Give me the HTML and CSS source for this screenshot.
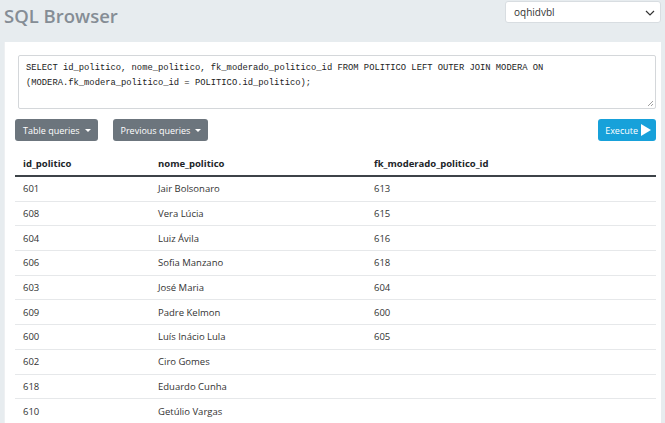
FILE: index.html
```html
<!DOCTYPE html>
<html>
<head>
<meta charset="utf-8">
<link rel="stylesheet" href="styles.css">
</head>
<body>
<header class="topbar">
  <h1 class="title">SQL Browser</h1>
  <div class="select">
    <span>oqhidvbl</span>
    <svg class="chev" width="10" height="6" viewBox="0 0 10 6"><path d="M1 1l4 4 4-4" fill="none" stroke="#333" stroke-width="1.2"/></svg>
  </div>
</header>
<main class="panel">
  <div class="editor">SELECT id_politico, nome_politico, fk_moderado_politico_id FROM POLITICO LEFT OUTER JOIN MODERA ON (MODERA.fk_modera_politico_id = POLITICO.id_politico);<svg class="grip" width="7" height="7" viewBox="0 0 7 7"><path d="M6 1L1 6M6 4L4 6" stroke="#888" stroke-width="0.8"/></svg></div>
  <div class="toolbar">
    <button class="btn btn-grey">Table queries <span class="caret"></span></button>
    <button class="btn btn-grey">Previous queries <span class="caret"></span></button>
    <button class="btn btn-blue exec">Execute <svg width="10" height="12" viewBox="0 0 10 12"><path d="M0 0L10 6L0 12Z" fill="#fff"/></svg></button>
  </div>
  <table class="results">
    <thead>
      <tr><th class="c1">id_politico</th><th class="c2">nome_politico</th><th>fk_moderado_politico_id</th></tr>
    </thead>
    <tbody>
      <tr><td>601</td><td>Jair Bolsonaro</td><td>613</td></tr>
      <tr><td>608</td><td>Vera Lúcia</td><td>615</td></tr>
      <tr><td>604</td><td>Luiz Ávila</td><td>616</td></tr>
      <tr><td>606</td><td>Sofia Manzano</td><td>618</td></tr>
      <tr><td>603</td><td>José Maria</td><td>604</td></tr>
      <tr><td>609</td><td>Padre Kelmon</td><td>600</td></tr>
      <tr><td>600</td><td>Luís Inácio Lula</td><td>605</td></tr>
      <tr><td>602</td><td>Ciro Gomes</td><td></td></tr>
      <tr><td>618</td><td>Eduardo Cunha</td><td></td></tr>
      <tr><td>610</td><td>Getúlio Vargas</td><td></td></tr>
    </tbody>
  </table>
</main>
</body>
</html>
```

FILE: styles.css
```css
html, body {
  margin: 0;
  padding: 0;
  background: #e7ecef;
  font-family: "Open Sans", "Noto Sans", sans-serif;
  color: #212529;
  overflow: hidden;
  height: 423px;
}
.topbar {
  display: flex;
  justify-content: space-between;
  align-items: flex-start;
  height: 42px;
  padding: 0 4px 0 4px;
}
.title {
  margin: 2px 0 0 0;
  font-weight: 600;
  font-size: 18.5px;
  line-height: 28px;
  color: #858d95;
}
.select {
  margin-top: 1px;
  width: 156px;
  height: 22px;
  background: #fff;
  border: 1px solid #d8dde1;
  border-radius: 3px;
  display: flex;
  align-items: center;
  justify-content: space-between;
  padding: 0 5px 0 8px;
  box-sizing: border-box;
  font-size: 10px;
  color: #333;
}
.chev { margin-top: 1px; }
.panel {
  background: #fff;
  margin-left: 4px;
  margin-right: 4px;
  padding: 13px 5px 0 13px;
  height: 381px;
  box-sizing: border-box;
  overflow: hidden;
  border-left: 1px solid #eef0f2;
}
.editor {
  position: relative;
  height: 54px;
  border: 1px solid #d4d7da;
  border-radius: 2px;
  box-sizing: border-box;
  padding: 5px 7px;
  font-family: "Liberation Mono", monospace;
  font-size: 8.8px;
  line-height: 15px;
  color: #222;
}
.grip {
  position: absolute;
  right: 1px;
  bottom: 1px;
}
.toolbar {
  display: flex;
  gap: 15px;
  margin-top: 10px;
  margin-left: -3px;
}
.btn {
  height: 22px;
  border: none;
  border-radius: 3px;
  color: #fff;
  font-family: "Open Sans", "Noto Sans", sans-serif;
  font-size: 9px;
  padding: 0 7px 0 8px;
  display: flex;
  align-items: center;
  gap: 5px;
}
.btn-grey { background: #6c757d; }
.btn-blue { background: #17a1da; }
.exec { margin-left: auto; gap: 3px; padding: 0 5px 0 7px; }
.caret {
  width: 0;
  height: 0;
  border-left: 3px solid transparent;
  border-right: 3px solid transparent;
  border-top: 3px solid #fff;
}
.results {
  margin-top: 10px;
  margin-left: -3px;
  width: 641px;
  border-collapse: collapse;
  font-size: 9.5px;
}
.results th {
  text-align: left;
  font-weight: 700;
  height: 24px;
  padding: 0 8px;
  border-bottom: 2px solid #3d4348;
  vertical-align: middle;
}
.results th.c1 { width: 119px; }
.results th.c2 { width: 200px; }
.results td {
  height: 23.7px;
  padding: 0 8px;
  border-bottom: 1px solid #e6e8ea;
  color: #333;
  vertical-align: middle;
}
```
